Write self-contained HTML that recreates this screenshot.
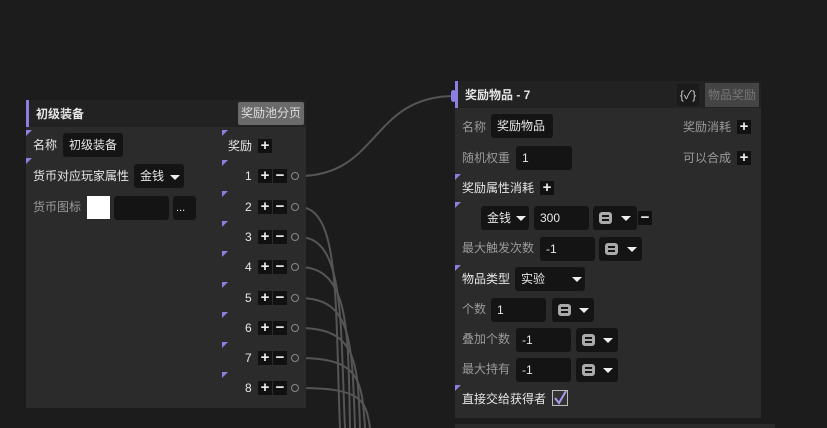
<!DOCTYPE html>
<html><head><meta charset="utf-8"><style>
body{margin:0;width:827px;height:428px;background:#1c1c1c;overflow:hidden;position:relative;font-family:"Liberation Sans","Noto Sans CJK SC",sans-serif;font-size:12px;line-height:16px;color:#e6e6e6}
.a{position:absolute;white-space:nowrap}
.node{position:absolute;background:#2b2b2b}
.hdr{position:absolute;left:0;right:0;top:0;height:27px;background:#222;border-left:3px solid #8b7fe0}
.in{position:absolute;background:#141414;border-radius:3px;height:24px;line-height:24px;padding-left:6px;box-sizing:border-box}
.tri{position:absolute;width:0;height:0;border-top:6px solid #8b7fe0;border-right:6px solid transparent}
.btn{position:absolute;width:14px;height:14px;background:#111;color:#eee;font-size:15px;line-height:14px;text-align:center;font-weight:bold}
.dim{color:#9a9a9a}
.dd{position:absolute;width:0;height:0;border-top:5px solid #eee;border-left:5px solid transparent;border-right:5px solid transparent}
.eq{position:absolute;width:13px;height:12px;background:#aaa;border-radius:3px}
.eq:after{content:"";position:absolute;left:3px;right:3px;top:3px;border-top:2px solid #141414;border-bottom:2px solid #141414;height:2px}
.port{position:absolute;width:6px;height:6px;border:1px solid #888;border-radius:50%}
</style></head><body>
<svg class="a" style="left:0;top:0" width="827" height="428">
<g fill="none" stroke="#555" stroke-width="2">
<path d="M299 176 C380 176 370 96 455 96"/>
<path d="M299 207 C340 207 335 300 340 428"/>
<path d="M299 237 C345 237 340 320 345 428"/>
<path d="M299 267 C350 267 348 330 350 428"/>
<path d="M299 298 C352 298 352 340 355 428"/>
<path d="M299 328 C356 328 358 360 360 428"/>
<path d="M299 358 C360 358 362 380 365 428"/>
<path d="M299 388 C362 388 366 400 370 428"/>
</g></svg>

<div class="node" style="left:26px;top:100px;width:280px;height:308px">
<div class="hdr"><span class="a" style="left:7px;top:6px;font-weight:bold">初级装备</span></div>
<div class="a" style="left:212px;top:2px;width:66px;height:23px;background:#6a6a6a;color:#ddd;text-align:center;line-height:23px;border-radius:2px">奖励池分页</div>
<div class="tri" style="left:0;top:30px"></div>
<span class="a" style="left:7px;top:37px">名称</span>
<div class="in" style="left:37px;top:33px;width:60px">初级装备</div>
<div class="tri" style="left:0;top:58px"></div>
<span class="a" style="left:7px;top:68px">货币对应玩家属性</span>
<div class="in" style="left:108px;top:64px;width:50px">金钱</div><div class="dd" style="left:144px;top:75px"></div>
<span class="a dim" style="left:7px;top:99px">货币图标</span>
<div class="a" style="left:61px;top:96px;width:23px;height:23px;background:#fff"></div>
<div class="in" style="left:88px;top:96px;width:55px"></div>
<div class="in" style="left:147px;top:96px;width:23px;padding-left:3px;font-size:11px">...</div>
<div class="tri" style="left:196px;top:30px"></div>
<span class="a" style="left:202px;top:38px">奖励</span><div class="btn" style="left:232px;top:39px">+</div>
</div>
<div id="rows"></div>
<script>
var h='';var ys=[176,207,237,267,298,328,358,388];
for(var i=0;i<8;i++){var y=ys[i];
h+='<div class="tri" style="left:222px;top:'+(y-16)+'px"></div>';
h+='<span class="a" style="left:245px;top:'+(y-8)+'px">'+(i+1)+'</span>';
h+='<div class="btn" style="left:258px;top:'+(y-7)+'px">+</div><div class="btn" style="left:273px;top:'+(y-7)+'px">−</div>';
h+='<div class="port" style="left:291px;top:'+(y-4)+'px;background:#2b2b2b"></div>';}
document.getElementById('rows').innerHTML=h;
</script>

<div class="node" style="left:455px;top:81px;width:306px;height:337px">
<div class="hdr"><span class="a" style="left:7px;top:6px;font-weight:bold">奖励物品 - 7</span></div>
<div class="a" style="left:222px;top:3px;width:22px;height:22px;background:#1a1a1a;color:#ccc;text-align:center;line-height:22px;font-size:12px">{✓}</div>
<div class="a" style="left:250px;top:2px;width:54px;height:24px;background:#444;color:#777;text-align:center;line-height:24px">物品奖励</div>
<span class="a dim" style="left:7px;top:38px">名称</span>
<div class="in" style="left:36px;top:33px;width:62px">奖励物品</div>
<span class="a dim" style="left:228px;top:38px">奖励消耗</span><div class="btn" style="left:282px;top:39px">+</div>
<span class="a dim" style="left:7px;top:69px">随机权重</span>
<div class="in" style="left:61px;top:65px;width:56px">1</div>
<span class="a dim" style="left:228px;top:69px">可以合成</span><div class="btn" style="left:282px;top:70px">+</div>
<div class="tri" style="left:0;top:93px"></div>
<span class="a" style="left:7px;top:99px">奖励属性消耗</span><div class="btn" style="left:85px;top:100px">+</div>
<div class="tri" style="left:0;top:121px"></div>
<div class="in" style="left:26px;top:125px;width:48px">金钱</div><div class="dd" style="left:61px;top:135px"></div>
<div class="in" style="left:79px;top:125px;width:55px">300</div>
<div class="in" style="left:138px;top:125px;width:44px"></div><div class="eq" style="left:144px;top:131px"></div><div class="dd" style="left:166px;top:135px"></div>
<div class="btn" style="left:183px;top:130px">−</div>
<span class="a dim" style="left:7px;top:159px">最大触发次数</span>
<div class="in" style="left:85px;top:156px;width:55px">-1</div>
<div class="in" style="left:144px;top:156px;width:43px"></div><div class="eq" style="left:150px;top:162px"></div><div class="dd" style="left:172px;top:166px"></div>
<div class="tri" style="left:0;top:184px"></div>
<span class="a" style="left:7px;top:190px">物品类型</span>
<div class="in" style="left:60px;top:186px;width:70px">实验</div><div class="dd" style="left:117px;top:196px"></div>
<span class="a dim" style="left:7px;top:220px">个数</span>
<div class="in" style="left:36px;top:217px;width:55px">1</div>
<div class="in" style="left:97px;top:217px;width:42px"></div><div class="eq" style="left:103px;top:223px"></div><div class="dd" style="left:124px;top:227px"></div>
<span class="a dim" style="left:7px;top:250px">叠加个数</span>
<div class="in" style="left:61px;top:247px;width:55px">-1</div>
<div class="in" style="left:121px;top:247px;width:42px"></div><div class="eq" style="left:127px;top:253px"></div><div class="dd" style="left:148px;top:257px"></div>
<span class="a dim" style="left:7px;top:280px">最大持有</span>
<div class="in" style="left:61px;top:277px;width:55px">-1</div>
<div class="in" style="left:121px;top:277px;width:42px"></div><div class="eq" style="left:127px;top:283px"></div><div class="dd" style="left:148px;top:287px"></div>
<div class="tri" style="left:0;top:304px"></div>
<span class="a" style="left:7px;top:310px">直接交给获得者</span>
<div class="a" style="left:97px;top:309px;width:14px;height:14px;border:1px solid #bbb;background:#333">
<svg width="14" height="14" style="position:absolute;left:0;top:0"><path d="M2 7 L6 12 L13 0" fill="none" stroke="#a99cf0" stroke-width="2"/></svg></div>
</div>
<div class="a" style="left:451px;top:90px;width:5px;height:12px;background:#8b7fe0;border-radius:3px"></div>
<div class="a" style="left:455px;top:424px;width:320px;height:4px;background:#2b2b2b"></div>
</body></html>
